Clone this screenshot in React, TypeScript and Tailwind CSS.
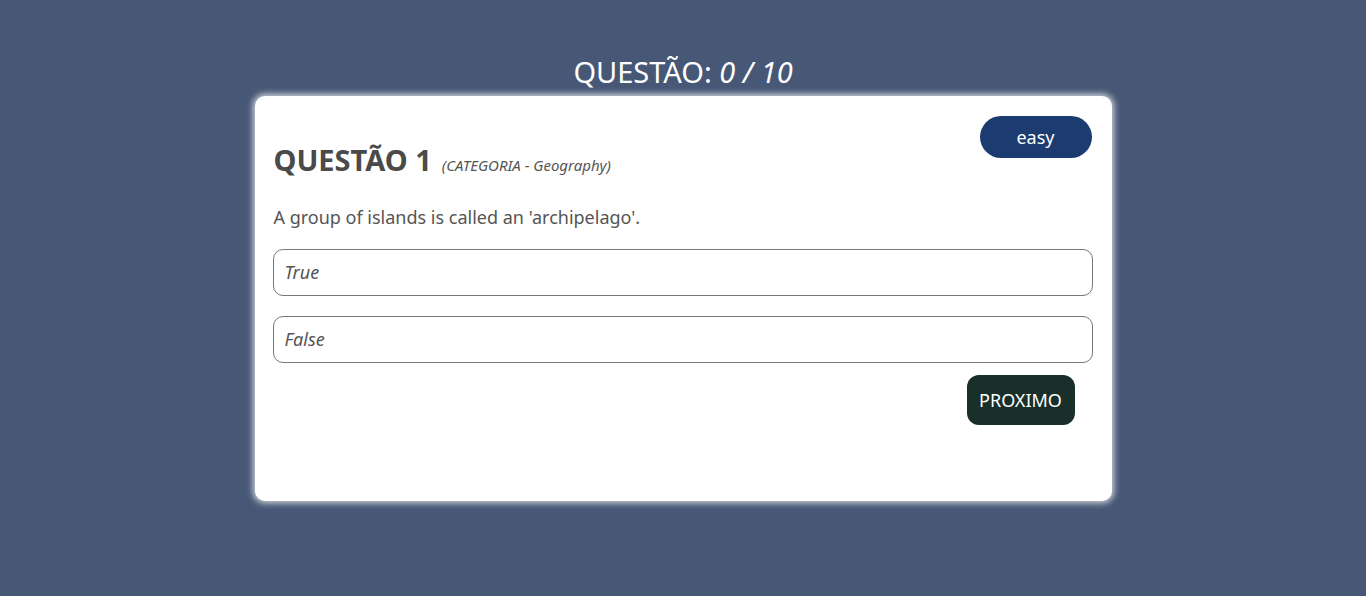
export default function App() {
  const options = ["True", "False"];
  return (
    <div className="min-h-screen w-full bg-[#475876] font-['Noto_Sans',sans-serif] flex flex-col items-center pt-[52px]">
      <h2 className="text-[29px] leading-[40px] text-white">
        QUESTÃO: <i>0 / 10</i>
      </h2>
      <div className="mt-[4px] w-[857px] h-[405px] bg-white rounded-[10px] shadow-[0_0_6px_2px_rgba(255,255,255,0.75)] pl-[18px] pr-[19px] pt-[20px]">
        <div className="flex items-start justify-between">
          <div className="flex items-baseline gap-[10px] pt-[26px] pl-px">
            <h1 className="text-[29px] leading-[36px] font-bold text-[#4a4a4a]">QUESTÃO 1</h1>
            <span className="text-[15px] italic text-[#555]">(CATEGORIA - Geography)</span>
          </div>
          <span className="mr-[1px] w-[112px] h-[42px] rounded-full bg-[#1c3b70] text-white text-[18px] flex items-center justify-center">
            easy
          </span>
        </div>
        <p className="mt-[26px] pl-px text-[18px] leading-[26px] text-[#555]">
          A group of islands is called an 'archipelago'.
        </p>
        <div className="mt-[19px] flex flex-col gap-[20px]">
          {options.map((o) => (
            <button
              key={o}
              className="h-[47px] w-full border border-[#777] rounded-[10px] text-left px-[11px] text-[18px] italic text-[#555]"
            >
              {o}
            </button>
          ))}
        </div>
        <div className="mt-[12px] flex justify-end pr-[18px]">
          <button className="w-[108px] h-[50px] rounded-[12px] bg-[#182f2a] text-white text-[18px]">PROXIMO</button>
        </div>
      </div>
    </div>
  );
}
